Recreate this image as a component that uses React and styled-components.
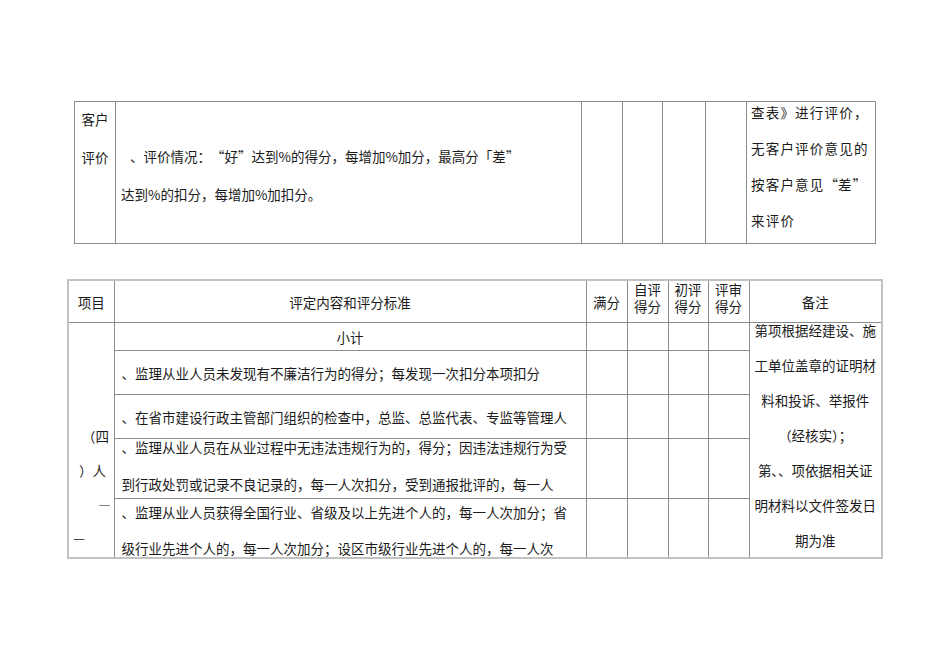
import React from 'react';
import styled, { createGlobalStyle } from 'styled-components';

// two scanned score-sheet tables, laid out as real tables

const GlobalStyle = createGlobalStyle`
  html, body {
    margin: 0;
    padding: 0;
    background: #ffffff;
  }
  body {
    font-family: "Noto Sans CJK SC", "Noto Sans", sans-serif;
    color: #1b1b1b;
  }
`;

const Page = styled.div`
  width: 950px;
  min-height: 672px;
  box-sizing: border-box;
  padding-top: 101px;
`;

const Sheet = styled.table`
  border-collapse: collapse;
  table-layout: fixed;
  width: ${(p) => p.$width}px;
  margin-left: ${(p) => p.$left}px;
  margin-bottom: ${(p) => p.$gap || 0}px;
  border: ${(p) => p.$edge || '1px solid #9a9a9a'};
  font-size: 13.5px;
`;

const Col = styled.col`
  width: ${(p) => p.$w}px;
`;

const Cell = styled.td`
  border: 1px solid ${(p) => p.$line || '#8c8c8c'};
  padding: 0 0 0 ${(p) => p.$pl || 0}px;
  height: ${(p) => (p.$h ? `${p.$h}px` : 'auto')};
  text-align: ${(p) => p.$align || 'left'};
  vertical-align: ${(p) => p.$valign || 'middle'};
  line-height: ${(p) => p.$lh || 20}px;
  white-space: nowrap;
  overflow: visible;
`;

const Lines = styled.div`
  line-height: ${(p) => p.$lh}px;
  margin-top: ${(p) => p.$shift || 0}px;
  padding-top: ${(p) => p.$lead || 0}px;
  height: ${(p) => (p.$box ? `${p.$box}px` : 'auto')};
  letter-spacing: ${(p) => p.$track || 0}px;
  text-indent: ${(p) => p.$indent || 0}px;
  white-space: nowrap;
`;

// full-width quote marks, as in the scanned page
const Wide = styled.span`
  display: inline-block;
  width: 1em;
  text-indent: 0;
  text-align: ${(p) => (p.$open ? 'right' : 'left')};
`;

const ItemStack = styled.div`
  line-height: 33.5px;
  padding-bottom: 3px;
`;

const ItemLine = styled.div`
  text-align: ${(p) => p.$side || 'left'};
  padding-left: ${(p) => (p.$side === 'right' ? 0 : p.$off)}px;
  padding-right: ${(p) => (p.$side === 'right' ? p.$off : 0)}px;
  color: ${(p) => p.$tone || 'inherit'};
`;

const Subtotal = styled.div`
  padding-top: 3px;
  line-height: 22px;
`;

const TopSheet = () => (
  <Sheet $width={801} $left={74} $gap={35}>
    <colgroup>
      <Col $w={41} />
      <Col $w={466} />
      <Col $w={41} />
      <Col $w={40} />
      <Col $w={43} />
      <Col $w={41} />
      <Col $w={129} />
    </colgroup>
    <tbody>
      <tr>
        <Cell $h={141} $align="center" $valign="top">
          <Lines $lh={38} $shift={-2} $box={100}>
            客户
            <br />
            评价
          </Lines>
        </Cell>
        <Cell $valign="top" $pl={5}>
          <Lines $lh={38} $lead={35} $indent={9}>
            、评价情况：<Wide $open>“</Wide>好<Wide>”</Wide>达到%的得分，每增加%加分，最高分「差<Wide>”</Wide>
            <br />
            达到%的扣分，每增加%加扣分。
          </Lines>
        </Cell>
        <Cell />
        <Cell />
        <Cell />
        <Cell />
        <Cell $valign="top" $pl={4}>
          <Lines $lh={36} $shift={-8} $box={128} $track={1.2}>
            查表》进行评价，
            <br />
            无客户评价意见的
            <br />
            按客户意见<Wide $open>“</Wide>差<Wide>”</Wide>
            <br />
            来评价
          </Lines>
        </Cell>
      </tr>
    </tbody>
  </Sheet>
);

const BottomSheet = () => (
  <Sheet $width={814} $left={67} $edge="2px solid #c2c2c2">
    <colgroup>
      <Col $w={46} />
      <Col $w={472} />
      <Col $w={41} />
      <Col $w={41} />
      <Col $w={40} />
      <Col $w={41} />
      <Col $w={133} />
    </colgroup>
    <tbody>
      <tr>
        <Cell $h={41} $align="center">项目</Cell>
        <Cell $align="center">评定内容和评分标准</Cell>
        <Cell $align="center">满分</Cell>
        <Cell $align="center" $valign="top" $lh={17}>
          自评
          <br />
          得分
        </Cell>
        <Cell $align="center" $valign="top" $lh={17}>
          初评
          <br />
          得分
        </Cell>
        <Cell $align="center" $valign="top" $lh={17}>
          评审
          <br />
          得分
        </Cell>
        <Cell $align="center">备注</Cell>
      </tr>
      <tr>
        <Cell rowSpan={5} $valign="bottom">
          <ItemStack>
            <ItemLine $off={13}>（四</ItemLine>
            <ItemLine $off={10}>）人</ItemLine>
            <ItemLine $side="right" $off={3} $tone="#666">—</ItemLine>
            <ItemLine $off={4}>—</ItemLine>
          </ItemStack>
        </Cell>
        <Cell $h={27} $align="center" $valign="top">
          <Subtotal>小计</Subtotal>
        </Cell>
        <Cell />
        <Cell />
        <Cell />
        <Cell />
        <Cell rowSpan={5} $align="center" $valign="top">
          <Lines $lh={35} $shift={-10} $box={220}>
            第项根据经建设、施
            <br />
            工单位盖章的证明材
            <br />
            料和投诉、举报件
            <br />
            （经核实）；
            <br />
            第、、项依据相关证
            <br />
            明材料以文件签发日
            <br />
            期为准
          </Lines>
        </Cell>
      </tr>
      <tr>
        <Cell $h={43} $pl={7}>、监理从业人员未发现有不廉洁行为的得分；每发现一次扣分本项扣分</Cell>
        <Cell />
        <Cell />
        <Cell />
        <Cell />
      </tr>
      <tr>
        <Cell $h={43} $pl={7}>、在省市建设行政主管部门组织的检查中，总监、总监代表、专监等管理人</Cell>
        <Cell />
        <Cell />
        <Cell />
        <Cell />
      </tr>
      <tr>
        <Cell $h={59} $pl={7} $valign="top">
          <Lines $lh={37} $shift={-10.5} $box={48}>
            、监理从业人员在从业过程中无违法违规行为的，得分；因违法违规行为受
            <br />
            到行政处罚或记录不良记录的，每一人次扣分，受到通报批评的，每一人
          </Lines>
        </Cell>
        <Cell />
        <Cell />
        <Cell />
        <Cell />
      </tr>
      <tr>
        <Cell $h={58} $pl={7} $valign="top">
          <Lines $lh={36.7} $shift={-5.5} $box={48}>
            、监理从业人员获得全国行业、省级及以上先进个人的，每一人次加分；省
            <br />
            级行业先进个人的，每一人次加分；设区市级行业先进个人的，每一人次
          </Lines>
        </Cell>
        <Cell />
        <Cell />
        <Cell />
        <Cell />
      </tr>
    </tbody>
  </Sheet>
);

const App = () => {
  return (
    <Page>
      <GlobalStyle />
      <TopSheet />
      <BottomSheet />
    </Page>
  );
};

export default App;
